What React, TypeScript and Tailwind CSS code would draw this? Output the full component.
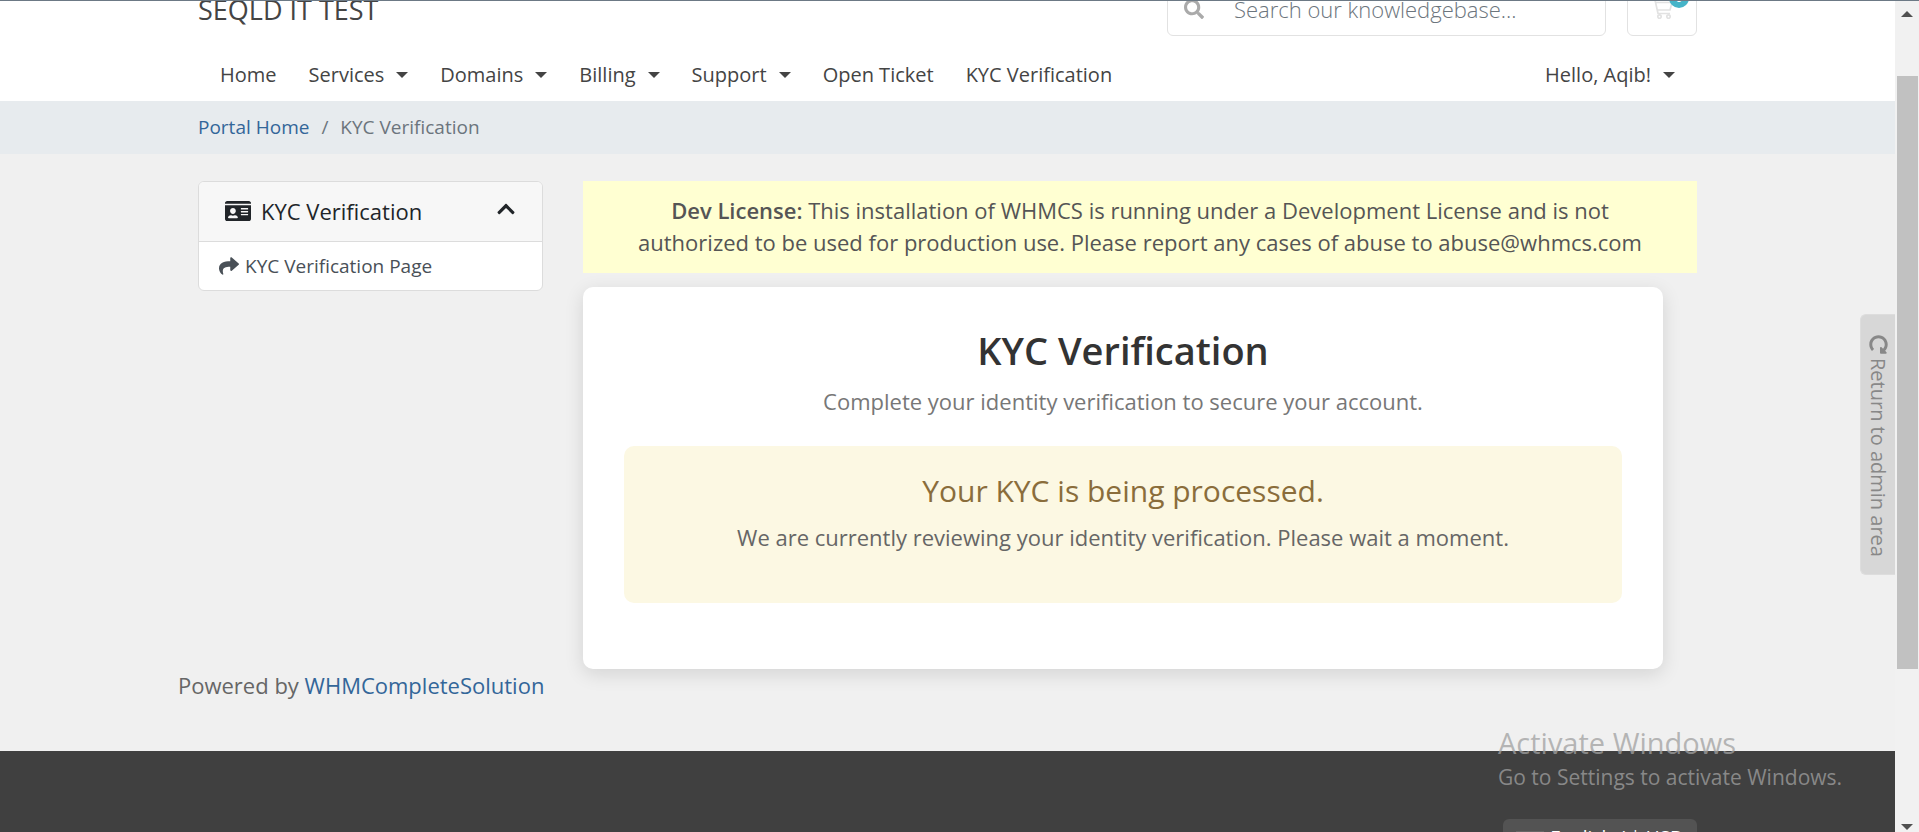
import { FaSearch, FaIdCard, FaShare, FaChevronUp, FaRedoAlt } from "react-icons/fa";

const navigation = [
  { name: "Home", dropdown: false },
  { name: "Services", dropdown: true },
  { name: "Domains", dropdown: true },
  { name: "Billing", dropdown: true },
  { name: "Support", dropdown: true },
  { name: "Open Ticket", dropdown: false },
  { name: "KYC Verification", dropdown: false },
];

function Caret() {
  return <span className="ml-3 border-x-6 border-t-6 border-x-transparent border-t-[#444]" aria-hidden="true" />;
}

function CartIcon() {
  return (
    <svg className="w-6 h-5" viewBox="0 0 24 20" fill="none" stroke="#e2e2e2" strokeWidth="1.7" aria-hidden="true">
      <path d="M1 1h4l3 13.5h12M5.6 3.5H22l-2 7.5H7.5" />
      <circle cx="9.5" cy="17.6" r="1.7" />
      <circle cx="18.5" cy="17.6" r="1.7" />
    </svg>
  );
}

function Header() {
  return (
    <header className="bg-white shrink-0">
      <div className="max-w-[1499px] mx-auto -mt-5">
        {/* topbar start */}
        <div className="flex items-center justify-between h-[55px]">
          <a href="#" className="pt-0.5 text-[27px] leading-8 text-[#444]">
            SEQLD IT TEST
          </a>
          <div className="flex h-full">
            <label className="flex items-center w-[439px] h-full pl-4 border border-[#e2e2e2] rounded-md">
              <span className="sr-only">Search our knowledgebase</span>
              <FaSearch className="w-5 h-5 text-[#aaa]" />
              <input
                type="text"
                placeholder="Search our knowledgebase..."
                className="flex-1 min-w-0 ml-[30px] pt-0.5 text-[22px] font-light outline-none placeholder:text-[#6c757d]"
              />
            </label>
            <button
              type="button"
              className="relative flex items-center justify-center w-[70px] ml-[21px] border border-[#e2e2e2] rounded-md"
            >
              <span className="sr-only">Shopping Cart</span>
              <CartIcon />
              <span className="absolute top-1.5 right-[7px] w-5 h-5 rounded-full bg-[#46b4c8] text-white text-xs leading-5">
                0
              </span>
            </button>
          </div>
        </div>
        {/* topbar end */}

        <nav className="flex justify-between mt-4 px-[22px] h-[49px] pb-1 text-[20px] text-[#444]">
          <div className="flex items-center gap-8">
            {navigation.map((item) => (
              <a key={item.name} href="#" className="flex items-center">
                {item.name}
                {item.dropdown && <Caret />}
              </a>
            ))}
          </div>
          <a href="#" className="flex items-center">
            Hello, Aqib!
            <Caret />
          </a>
        </nav>
      </div>
    </header>
  );
}

function Sidebar() {
  return (
    <aside className="w-[345px] shrink-0">
      <div className="border border-[#dcdcdc] rounded-md overflow-hidden bg-white">
        <button
          type="button"
          className="flex items-center w-full h-[60px] px-[26px] pb-0.5 bg-[#f7f7f7] border-b border-[#dcdcdc] text-[22px] text-[#212529]"
        >
          <FaIdCard className="w-[26px] h-[26px]" />
          <span className="ml-2.5">KYC Verification</span>
          <FaChevronUp className="w-5 h-5 ml-auto mb-1" />
        </button>
        <a href="#" className="flex items-center h-12 px-5 text-[19px] text-[#495057]">
          <FaShare className="w-5 h-5" />
          <span className="ml-1.5">KYC Verification Page</span>
        </a>
      </div>
    </aside>
  );
}

function Scrollbar() {
  return (
    <div className="flex flex-col items-center w-6 shrink-0 pt-2.5 pb-0.5 bg-[#f1f1f1]" aria-hidden="true">
      <span className="border-x-6 border-b-6 border-x-transparent border-b-[#505050]" />
      <div className="w-[21px] h-[593px] mt-[59px] bg-[#c1c1c1]" />
      <span className="mt-auto border-x-6 border-t-6 border-x-transparent border-t-[#505050]" />
    </div>
  );
}

export default function App() {
  return (
    <div className="relative flex h-screen overflow-hidden border-t border-[#6c7985] bg-[#f0f0f0] font-['Open_Sans',sans-serif]">
      <div className="flex flex-col flex-1 min-w-0 overflow-hidden">
        <Header />

        {/* breadcrumb */}
        <nav className="shrink-0 bg-[#e7ebee] text-[19px]">
          <ol className="flex items-center gap-3 max-w-[1499px] h-[53px] mx-auto text-[#6c757d]">
            <li>
              <a href="#" className="text-[#336699]">
                Portal Home
              </a>
            </li>
            <li aria-hidden="true">/</li>
            <li>KYC Verification</li>
          </ol>
        </nav>

        <main className="flex-1 w-full max-w-[1499px] mx-auto pt-[27px] text-[22px] leading-8 text-[#666]">
          <div className="flex gap-10">
            <Sidebar />
            <div className="flex-1 min-w-0">
              <div className="px-12 pt-[13px] pb-[15px] bg-[#ffffd2] text-center text-[#555]">
                <strong className="font-semibold">Dev License:</strong> This installation of WHMCS is running under a
                Development License and is not authorized to be used for production use. Please report any cases of abuse
                to abuse@whmcs.com
              </div>

              <section className="mt-3.5 mr-[34px] px-[41px] pt-10 pb-[66px] bg-white rounded-[10px] text-center shadow-[0_5px_19px_rgba(0,0,0,0.12)]">
                <h1 className="text-[38px] leading-[46px] font-semibold text-[#333]">KYC Verification</h1>
                <p className="mt-3 text-[#777]">Complete your identity verification to secure your account.</p>
                <div className="mt-[29px] px-6 pt-[25px] pb-[50px] bg-[#fcf8e3] rounded-[10px]">
                  <h2 className="text-[30px] leading-10 text-[#8a6d3b]">Your KYC is being processed.</h2>
                  <p className="mt-2.5">We are currently reviewing your identity verification. Please wait a moment.</p>
                </div>
              </section>
            </div>
          </div>
          <p className="-ml-5">
            Powered by{" "}
            <a href="#" className="text-[#336699]">
              WHMCompleteSolution
            </a>
          </p>
        </main>

        <footer className="h-[81px] shrink-0 pt-[68px] bg-[#404040] overflow-hidden">
          <div className="flex justify-end max-w-[1499px] mx-auto">
            <button
              type="button"
              className="flex items-center justify-center gap-1.5 w-[194px] h-9 bg-[#535353] rounded-md text-[19px] text-white"
            >
              <span className="w-7 h-3 bg-[#666]" />
              English / $ USD
            </button>
          </div>
        </footer>
      </div>

      <Scrollbar />

      {/* return to admin tab */}
      <button
        type="button"
        className="absolute right-6 top-[313px] flex items-center gap-1 w-[35px] h-[261px] pt-5 rounded-l-md border border-r-0 border-[#ddd] bg-[#d7d7d7] text-[20px] text-[#888] [writing-mode:vertical-rl]"
      >
        <FaRedoAlt className="w-[19px] h-[19px] rotate-90" />
        Return to admin area
      </button>

      {/* activation watermark */}
      <div className="absolute right-20 bottom-[39px] w-[341px] whitespace-nowrap text-[#a0a0a0]/75 pointer-events-none">
        <p className="text-[29px] leading-9">Activate Windows</p>
        <p className="text-[21px] leading-8">Go to Settings to activate Windows.</p>
      </div>
    </div>
  );
}
